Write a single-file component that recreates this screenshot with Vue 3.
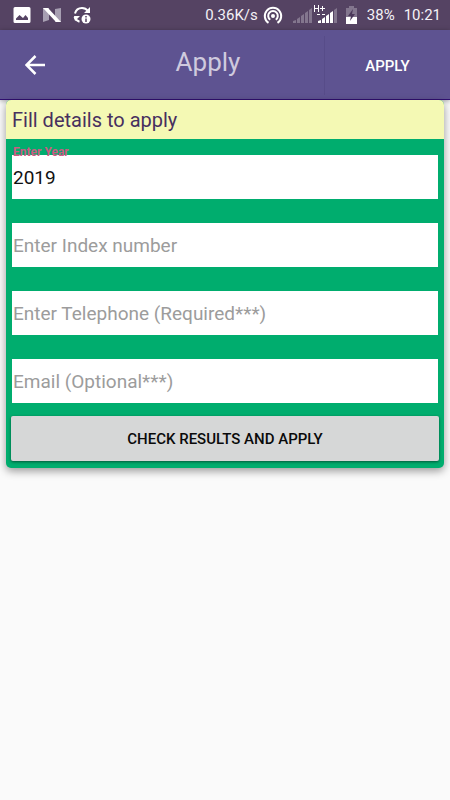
<script setup>
import { reactive } from 'vue'

const form = reactive({ year: '2019', index: '', phone: '', email: '' })
const fields = [
  { key: 'index', type: 'text', hint: 'Enter Index number' },
  { key: 'phone', type: 'tel', hint: 'Enter Telephone (Required***)' },
  { key: 'email', type: 'email', hint: 'Email (Optional***)' },
]
</script>

<template>
  <div class="screen">
    <div class="status">
      <div class="notices">
        <svg width="18" height="18" viewBox="0 0 18 18" aria-hidden="true">
          <path fill="#fff" fill-rule="evenodd" d="M2 1h14a1.500 1.500 0 0 1 1.500 1.500v13A1.500 1.500 0 0 1 16 17H2a1.500 1.500 0 0 1-1.500-1.500v-13A1.500 1.500 0 0 1 2 1zM3 14h12v-2l-2.500-3-2.500 3L6.500 9 3 12.500z" />
        </svg>
        <svg width="20" height="18" viewBox="0 0 20 18" aria-hidden="true">
          <path fill="#a79fb2" d="M1 2h6v12l-6 2zM13 3l6-1v14h-6z" />
          <path fill="#fff" d="M1 2h5l13 14h-5z" />
        </svg>
        <svg width="18" height="18" viewBox="0 0 18 18" aria-hidden="true">
          <path fill="none" stroke="#fff" stroke-width="2" d="M2 7.500C3 3.500 6 2 9 2c2.500 0 4.500 1 6 3M1.500 11c1 2.500 2.500 4 5 4.800" />
          <path fill="#fff" d="M17 1v6h-6zM1 10h6l-5 5z" />
          <circle cx="13" cy="13" r="4.500" fill="#fff" />
          <path stroke="#554363" stroke-width="1.500" d="M13 10v1.500M13 12.500V16" />
        </svg>
      </div>
      <div class="system">
        <span>0.36K/s</span>
        <svg class="hotspot" width="20" height="20" viewBox="0 0 20 20" aria-hidden="true">
          <g fill="none" stroke="#fff" stroke-width="2">
            <path d="M5.500 17.800a8.200 8.200 0 1 1 9 0" />
            <path d="M7.200 14.800a4.800 4.800 0 1 1 5.600 0" />
          </g>
          <circle cx="10" cy="11" r="2" fill="#fff" />
        </svg>
        <svg class="signal" width="47" height="22" viewBox="0 0 47 22" aria-hidden="true">
          <g fill="#83768e">
            <path d="M1 19v-2l3-1v3zM5 19v-4l3-2v6zM9 19v-7l3-2v9zM13 19V9l3-2v12zM17 19V6l3-2v15zM42 19V6l3-2v15z" />
          </g>
          <path fill="#fff" d="M26 19v-2l3-1v3zM30 19v-4l3-2v6zM34 19v-7l3-2v9zM38 19V9l3-2v12z" />
          <path fill="none" stroke="#fff" d="M22.500 1v7M26.500 1v7M22.500 4.500h4M28 4.500h5M30.500 2v5M25 10.500h3M30 10.500h3" />
        </svg>
        <svg class="battery" width="13" height="20" viewBox="0 0 13 20" aria-hidden="true">
          <path fill="#83768e" d="M4 1h5v2h3v10H1V3h3z" />
          <path fill="#fff" d="M1 12h11v7H1z" />
          <path fill="#4b385a" d="M8 4L3 11h3l-1 5 5-7H7z" />
        </svg>
        <span class="level">38%</span>
        <span>10:21</span>
      </div>
    </div>

    <header class="bar">
      <button class="back" type="button" aria-label="Back">
        <svg width="20" height="20" viewBox="0 0 20 20" aria-hidden="true">
          <path fill="none" stroke="#fff" stroke-width="2.500" d="M20 10H2M10.500 1L1.500 10l9 9" />
        </svg>
      </button>
      <h1>Apply</h1>
      <button class="action" type="button">APPLY</button>
    </header>

    <form class="card" @submit.prevent>
      <h2>Fill details to apply</h2>
      <div class="fields">
        <div class="field">
          <label for="year">Enter Year</label>
          <input id="year" v-model="form.year" type="text" />
        </div>
        <div v-for="f in fields" :key="f.key" class="field">
          <input
            :id="f.key"
            v-model="form[f.key]"
            :type="f.type"
            :placeholder="f.hint"
            :aria-label="f.hint"
          />
        </div>
      </div>
      <button class="submit" type="submit">CHECK RESULTS AND APPLY</button>
    </form>
  </div>
</template>

<style>
body {
  background: #fafafa;
}
</style>

<style scoped>
.screen {
  padding-bottom: 24px;
  font-family: Roboto, "Noto Sans", sans-serif;
}

.screen * {
  box-sizing: border-box;
}

svg {
  display: block;
  flex: none;
}

button {
  border: 0;
  font-family: inherit;
  font-weight: 500;
  font-size: 15px;
  cursor: pointer;
}

.status {
  display: flex;
  align-items: center;
  justify-content: space-between;
  height: 30px;
  padding: 0 9px 0 13px;
  background: #554363;
  color: #f4f1f6;
  font-size: 15px;
}

.notices,
.system {
  display: flex;
  align-items: center;
}

.notices {
  gap: 11px;
}

.hotspot {
  margin: 0 9px 0 5px;
}

.battery {
  margin: 0 9px 0 6px;
}

.level {
  margin-right: 9px;
}

.bar {
  position: relative;
  display: grid;
  grid-template-columns: 70px 1fr 126px;
  height: 70px;
  background: #5e5391;
  border-bottom: 1px solid #310f70;
  box-shadow: 0 1px 5px rgba(0, 0, 0, 0.35);
}

.back {
  display: grid;
  place-items: center;
  padding: 0;
  background: none;
}

h1 {
  margin: 0;
  padding: 0 0 6px 22px;
  align-self: center;
  text-align: center;
  color: #cfcade;
  font-size: 26px;
  line-height: 32px;
  font-weight: 400;
}

.action {
  margin: 6px 0 4px;
  border-left: 1px solid #574c89;
  background: none;
  color: #fff;
}

.card {
  position: relative;
  margin: 0 6px;
  padding-bottom: 7px;
  overflow: hidden;
  border-radius: 5px;
  background: #00ad6e;
  box-shadow: 0 3px 9px rgba(0, 0, 0, 0.4);
}

h2 {
  margin: 0;
  padding: 1px 6px 0;
  background: #f4f9b4;
  color: #47305f;
  font-size: 20px;
  line-height: 38px;
  font-weight: 400;
}

.fields {
  display: grid;
  gap: 24px;
  padding: 16px 6px 13px;
}

.field {
  position: relative;
}

label {
  position: absolute;
  z-index: 1;
  left: 1px;
  top: -11px;
  color: #cc5a83;
  font-size: 12px;
  line-height: 16px;
  font-weight: 700;
}

input {
  display: block;
  width: 100%;
  height: 44px;
  padding: 0 1px;
  border: 0;
  border-radius: 0;
  background: #fff;
  color: #111;
  font-family: inherit;
  font-size: 19px;
}

input::placeholder {
  color: #9c9c9c;
  opacity: 1;
}

.submit {
  display: block;
  width: calc(100% - 10px);
  height: 45px;
  margin: 0 5px;
  border-radius: 2px;
  background: #d6d7d7;
  color: #0a0a0a;
  box-shadow: 0 1px 3px rgba(0, 0, 0, 0.5);
}
</style>
